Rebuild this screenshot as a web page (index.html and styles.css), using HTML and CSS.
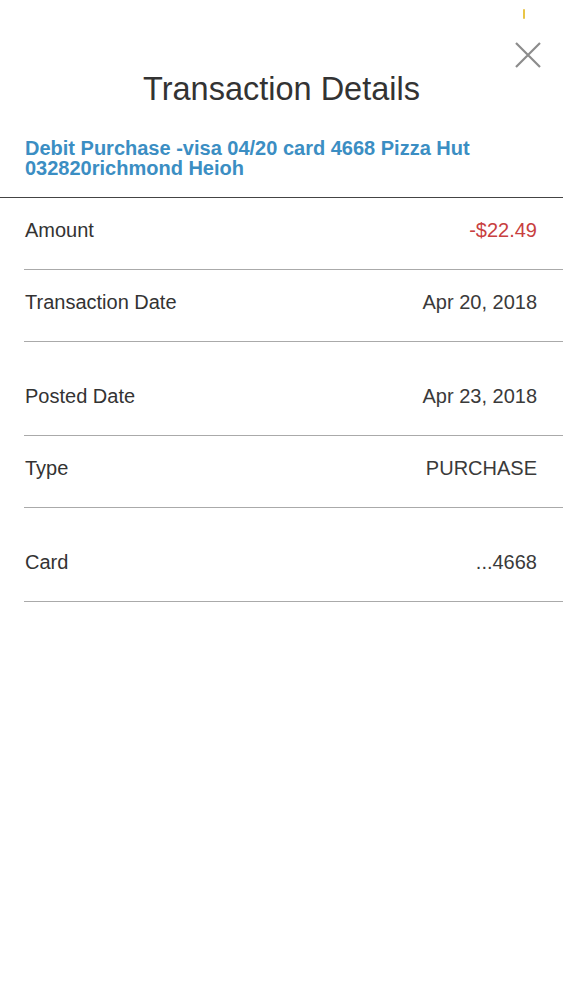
FILE: index.html
```html
<!DOCTYPE html>
<html lang="en">
<head>
    <meta charset="UTF-8">
    <title>Transaction Details</title>
    <link rel="stylesheet" href="styles.css">
</head>
<body>
<div class="sheet">
    <span class="status-tick"></span>
    <a href="#" class="close" aria-label="Close">
        <svg width="26" height="26" viewBox="0 0 26 26">
            <path d="M1 1L25 25M25 1L1 25" stroke="#8c8c8c" stroke-width="2.2" fill="none"/>
        </svg>
    </a>

    <h1 class="title">Transaction Details</h1>
    <div class="desc">Debit Purchase -visa 04/20 card 4668 Pizza Hut 032820richmond Heioh</div>

    <ul class="details">
        <li class="row">
            <span class="label">Amount</span>
            <span class="value negative">-$22.49</span>
        </li>
        <li class="row">
            <span class="label">Transaction Date</span>
            <span class="value">Apr 20, 2018</span>
        </li>
        <li class="row tall">
            <span class="label">Posted Date</span>
            <span class="value">Apr 23, 2018</span>
        </li>
        <li class="row">
            <span class="label">Type</span>
            <span class="value">PURCHASE</span>
        </li>
        <li class="row tall">
            <span class="label">Card</span>
            <span class="value">...4668</span>
        </li>
    </ul>
</div>
</body>
</html>
```

FILE: styles.css
```css
* {
    margin: 0;
    padding: 0;
}

ul {
    list-style: none;
}

body {
    background-color: #fff;
    font-family: "Liberation Sans", Arial, sans-serif;
    color: #333;
}

.sheet {
    position: relative;
    min-height: 1000px;
}

.status-tick {
    position: absolute;
    left: 523px;
    top: 9px;
    width: 2px;
    height: 10px;
    background-color: #e9c547;
    border-radius: 1px;
}

.close {
    position: absolute;
    left: 515px;
    top: 42px;
    width: 26px;
    height: 26px;
}

.close svg {
    display: block;
}

.title {
    padding-top: 69px;
    font-size: 32.5px;
    line-height: 40px;
    font-weight: normal;
    text-align: center;
    color: #333;
}

.desc {
    margin-top: 29px;
    padding: 0 25px 19px;
    font-size: 20px;
    line-height: 20px;
    font-weight: bold;
    color: #3b8ec3;
    border-bottom: 1px solid #444;
}

.details {
    padding-left: 24px;
}

.row {
    display: flex;
    justify-content: space-between;
    padding: 20px 26px 27px 1px;
    font-size: 20px;
    line-height: 24px;
    border-bottom: 1px solid #aaa;
}

.row.tall {
    padding-top: 42px;
}

.value {
    color: #3a3a3a;
}

.value.negative {
    color: #c8403f;
}
```
